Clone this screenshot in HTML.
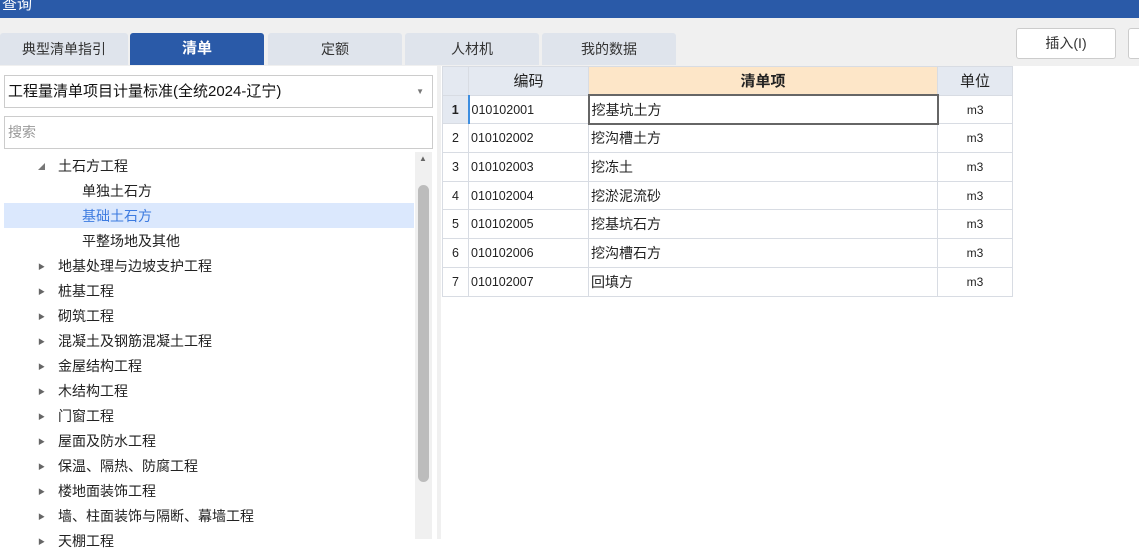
<!DOCTYPE html>
<html><head><meta charset="utf-8"><style>
*{margin:0;padding:0;box-sizing:border-box}
body{width:1139px;height:539px;overflow:hidden;background:#fff;font-family:"Liberation Sans","Noto Sans CJK SC",sans-serif;font-size:14px;color:#222;position:relative}
.abs{position:absolute}
.tab{position:absolute;top:33px;height:32px;background:#dfe4ec;border-radius:3px 3px 0 0;text-align:center;line-height:32px;color:#333;font-size:14px}
.tree div{position:absolute;height:25px;line-height:25px;font-size:14px;white-space:nowrap}
.arr{position:absolute;left:38px;font-size:7px;color:#666}
table{position:absolute;left:442px;top:66px;border-collapse:collapse;font-size:12.5px}
td{border:1px solid #d8dce3;height:28.7px;padding:0 2px}
</style></head><body>
<div class="abs" style="left:0;top:0;width:1139px;height:18px;background:#2a5aa8;color:#fff;font-size:15px;line-height:10px;padding-left:2px">查询</div>
<div class="abs" style="left:0;top:18px;width:1139px;height:48px;background:#f0f0f0"></div>
<div class="tab" style="left:0;width:128px">典型清单指引</div>
<div class="tab" style="left:130px;width:134px;background:#2a5aa8;color:#fff;font-weight:bold;font-size:15px">清单</div>
<div class="tab" style="left:268px;width:134px">定额</div>
<div class="tab" style="left:405px;width:134px">人材机</div>
<div class="tab" style="left:542px;width:134px">我的数据</div>
<div class="abs" style="left:1016px;top:28px;width:100px;height:31px;background:#fff;border:1px solid #ccc;border-radius:3px;text-align:center;line-height:29px;font-size:14px;color:#333">插入(I)</div>
<div class="abs" style="left:1128px;top:28px;width:20px;height:31px;background:#fff;border:1px solid #ccc;border-radius:3px"></div>
<div class="abs" style="left:4px;top:75px;width:429px;height:33px;border:1px solid #ccc;line-height:31px;padding-left:3px;font-size:15px;color:#111">工程量清单项目计量标准(全统2024-辽宁)<span style="position:absolute;right:8px;font-size:8px;color:#777">▼</span></div>
<div class="abs" style="left:4px;top:116px;width:429px;height:33px;border:1px solid #ccc;line-height:31px;padding-left:3px;color:#999;font-size:14px">搜索</div>
<div class="abs" style="left:4px;top:203px;width:410px;height:25px;background:#dbe8fd"></div>
<div class="tree">
<div style="top:154px;left:58px">土石方工程</div><span class="arr" style="top:162px;color:#777">◢</span>
<div style="top:179px;left:82px">单独土石方</div>
<div style="top:204px;left:82px;color:#3d7be0">基础土石方</div>
<div style="top:229px;left:82px">平整场地及其他</div>
<div style="top:254px;left:58px">地基处理与边坡支护工程</div><span class="arr" style="top:262px">▶</span>
<div style="top:279px;left:58px">桩基工程</div><span class="arr" style="top:287px">▶</span>
<div style="top:304px;left:58px">砌筑工程</div><span class="arr" style="top:312px">▶</span>
<div style="top:329px;left:58px">混凝土及钢筋混凝土工程</div><span class="arr" style="top:337px">▶</span>
<div style="top:354px;left:58px">金屋结构工程</div><span class="arr" style="top:362px">▶</span>
<div style="top:379px;left:58px">木结构工程</div><span class="arr" style="top:387px">▶</span>
<div style="top:404px;left:58px">门窗工程</div><span class="arr" style="top:412px">▶</span>
<div style="top:429px;left:58px">屋面及防水工程</div><span class="arr" style="top:437px">▶</span>
<div style="top:454px;left:58px">保温、隔热、防腐工程</div><span class="arr" style="top:462px">▶</span>
<div style="top:479px;left:58px">楼地面装饰工程</div><span class="arr" style="top:487px">▶</span>
<div style="top:504px;left:58px">墙、柱面装饰与隔断、幕墙工程</div><span class="arr" style="top:512px">▶</span>
<div style="top:529px;left:58px">天棚工程</div><span class="arr" style="top:537px">▶</span>
</div>
<div class="abs" style="left:415px;top:152px;width:17px;height:387px;background:#f0f0f0"></div>
<div class="abs" style="left:419px;top:154px;font-size:8px;color:#666">▲</div>
<div class="abs" style="left:418px;top:185px;width:11px;height:297px;background:#bcbcbc;border-radius:6px"></div>
<div class="abs" style="left:437px;top:66px;width:4px;height:473px;background:#f0f0f0"></div>
<table>
<tr style="background:#e4e9f1;text-align:center;font-size:15px"><td style="width:26px"></td><td style="width:120px">编码</td><td style="width:349px;background:#fde6c8;font-weight:bold">清单项</td><td style="width:75px">单位</td></tr>
<tr><td style="background:#e4e9f1;text-align:center;font-weight:bold;border-right:2px solid #3d8ee0">1</td><td>010102001</td><td style="border:2px solid #666;font-size:14px">挖基坑土方</td><td style="text-align:center;font-size:12px">m3</td></tr>
<tr><td style="text-align:center">2</td><td>010102002</td><td style="font-size:14px">挖沟槽土方</td><td style="text-align:center;font-size:12px">m3</td></tr>
<tr><td style="text-align:center">3</td><td>010102003</td><td style="font-size:14px">挖冻土</td><td style="text-align:center;font-size:12px">m3</td></tr>
<tr><td style="text-align:center">4</td><td>010102004</td><td style="font-size:14px">挖淤泥流砂</td><td style="text-align:center;font-size:12px">m3</td></tr>
<tr><td style="text-align:center">5</td><td>010102005</td><td style="font-size:14px">挖基坑石方</td><td style="text-align:center;font-size:12px">m3</td></tr>
<tr><td style="text-align:center">6</td><td>010102006</td><td style="font-size:14px">挖沟槽石方</td><td style="text-align:center;font-size:12px">m3</td></tr>
<tr><td style="text-align:center">7</td><td>010102007</td><td style="font-size:14px">回填方</td><td style="text-align:center;font-size:12px">m3</td></tr>
</table>
</body></html>
